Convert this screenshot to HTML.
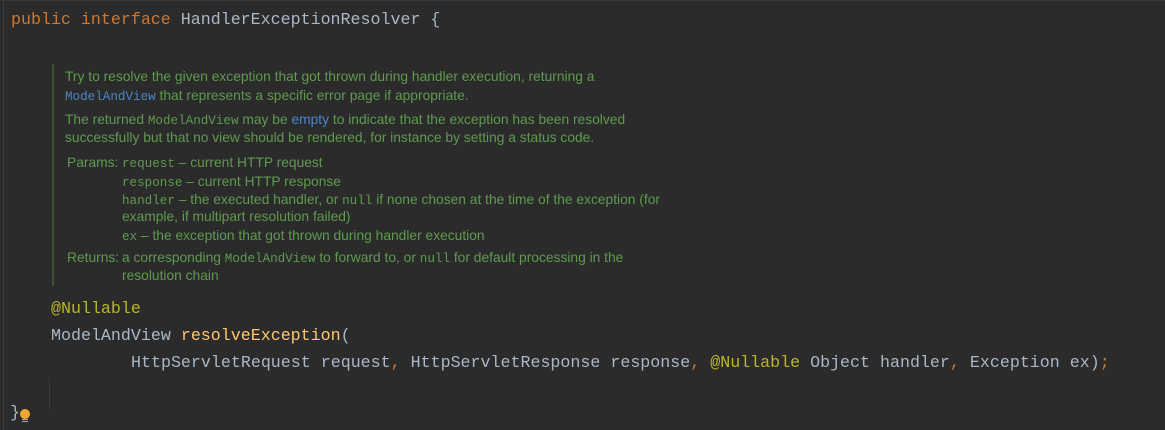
<!DOCTYPE html>
<html><head><meta charset="utf-8"><style>
html,body{margin:0;padding:0;}
body{width:1165px;height:430px;background:#2b2b2b;position:relative;overflow:hidden;}
.l{position:absolute;white-space:pre;}
.c{font-family:"Liberation Mono",monospace;font-size:16.65px;color:#a9b7c6;line-height:20px;}
.d{font-family:"Liberation Sans",sans-serif;font-size:13.8px;color:#5f9a4f;line-height:16px;}
.m{font-family:"Liberation Mono",monospace;font-size:12.6px;}
.k{color:#cc7832}.f{color:#ffc66d}.a{color:#bbb529}.b{color:#4a86c8}
</style></head><body>
<div style="position:absolute;left:3px;top:0;width:1px;height:430px;background:#3c3f41"></div>
<div style="position:absolute;left:0;top:0;width:1165px;height:1px;background:#3a3a3a"></div>
<div style="position:absolute;left:52px;top:64px;width:2px;height:222px;background:#3e5233"></div>
<div style="position:absolute;left:49px;top:378px;width:1px;height:32px;background:#3a3a3a"></div>

<div class="l c" style="left:11px;top:10px"><span class="k">public interface </span>HandlerExceptionResolver {</div>

<div class="l d" style="left:65px;top:69px">Try to resolve the given exception that got thrown during handler execution, returning a</div>
<div class="l d" style="left:65px;top:88px"><span class="m b">ModelAndView</span> that represents a specific error page if appropriate.</div>
<div class="l d" style="left:65px;top:112px">The returned <span class="m">ModelAndView</span> may be <span class="b">empty</span> to indicate that the exception has been resolved</div>
<div class="l d" style="left:65px;top:130px">successfully but that no view should be rendered, for instance by setting a status code.</div>
<div class="l d" style="left:67px;top:155px">Params:</div>
<div class="l d" style="left:122px;top:155px"><span class="m">request</span> – current HTTP request</div>
<div class="l d" style="left:122px;top:174px"><span class="m">response</span> – current HTTP response</div>
<div class="l d" style="left:122px;top:192px"><span class="m">handler</span> – the executed handler, or <span class="m">null</span> if none chosen at the time of the exception (for</div>
<div class="l d" style="left:122px;top:209px">example, if multipart resolution failed)</div>
<div class="l d" style="left:122px;top:228px"><span class="m">ex</span> – the exception that got thrown during handler execution</div>
<div class="l d" style="left:67px;top:250px">Returns:</div>
<div class="l d" style="left:122px;top:250px">a corresponding <span class="m">ModelAndView</span> to forward to, or <span class="m">null</span> for default processing in the</div>
<div class="l d" style="left:122px;top:268px">resolution chain</div>

<div class="l c" style="left:51px;top:299px"><span class="a">@Nullable</span></div>
<div class="l c" style="left:51px;top:326px">ModelAndView <span class="f">resolveException</span>(</div>
<div class="l c" style="left:131px;top:353px">HttpServletRequest request<span class="k">, </span>HttpServletResponse response<span class="k">, </span><span class="a">@Nullable </span>Object handler<span class="k">, </span>Exception ex)<span class="k">;</span></div>
<div class="l c" style="left:10px;top:403px">}</div>
<div style="position:absolute;left:20px;top:409px;width:10px;height:10px;border-radius:50%;background:#f0a732"></div>
<div style="position:absolute;left:22px;top:419px;width:6px;height:1px;background:#aaa"></div>
<div style="position:absolute;left:22px;top:421px;width:6px;height:1px;background:#aaa"></div>
</body></html>
